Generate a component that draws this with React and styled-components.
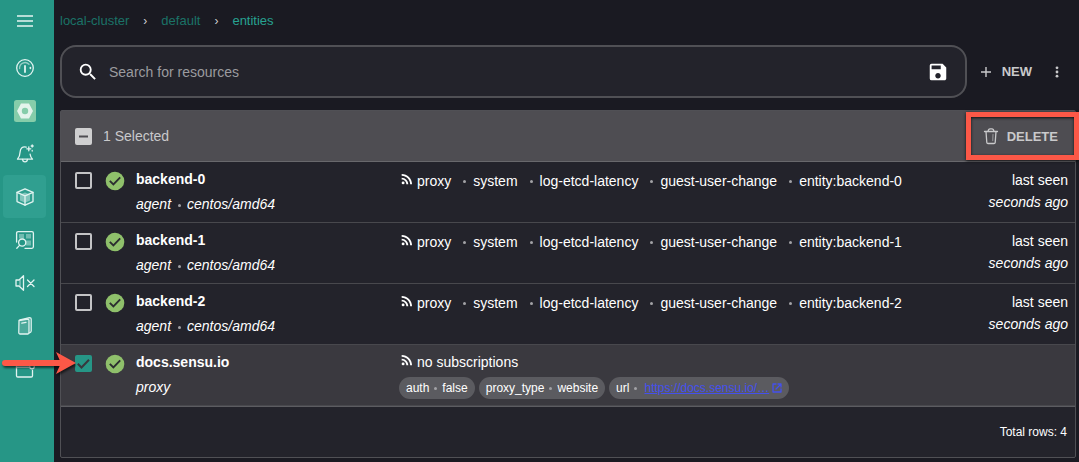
import React from "react";
import styled, { createGlobalStyle, css } from "styled-components";

const color = {
  page: "#1a1a22",
  panel: "#23232b",
  border: "#505055",
  header: "#4e4d52",
  selected: "#3a393f",
  teal: "#269686",
  tealDark: "#1b7267",
  tealBright: "#27a291",
  muted: "#c9c9cb",
  ok: "#8fc06b",
  callout: "#fc5847",
};

const GlobalStyle = createGlobalStyle`
  *, *::before, *::after { box-sizing: border-box; }
  body {
    margin: 0;
    background: ${color.page};
    color: #fff;
    font-family: "Liberation Sans", Arial, sans-serif;
    font-size: 14px;
  }
  button, input { font: inherit; color: inherit; }
`;

const Layout = styled.div`
  display: flex;
  min-height: 100vh;
`;

const Sidebar = styled.nav`
  flex: none;
  width: 54px;
  padding: 0 3px;
  background: ${color.teal};
`;

const MenuButton = styled.button`
  display: flex;
  align-items: center;
  justify-content: center;
  width: 43px;
  height: 42px;
  margin-bottom: 4px;
  padding: 0;
  border: 0;
  background: none;
`;

const NavLink = styled.a`
  display: flex;
  align-items: center;
  justify-content: center;
  width: 43px;
  height: 43px;
  border-radius: 4px;
  color: #e2f4f1;
  background: ${(p) => (p.$active ? "#309f90" : "none")};
`;

const Main = styled.main`
  flex: 1;
  min-width: 0;
  padding: 0 3px 4px 6px;
`;

const Breadcrumbs = styled.div`
  display: flex;
  align-items: center;
  height: 41px;
  margin-bottom: 4px;
  font-size: 13px;
`;

const Crumb = styled.a`
  color: ${(p) => (p.$current ? color.tealBright : color.tealDark)};
  text-decoration: none;
`;

const CrumbArrow = styled.span`
  width: 32px;
  text-align: center;
  color: #d0d0d2;
  font-size: 12px;
`;

const Toolbar = styled.div`
  display: flex;
  align-items: center;
  margin-bottom: 12px;
`;

const SearchBox = styled.div`
  flex: 1;
  display: flex;
  align-items: center;
  gap: 10px;
  height: 53px;
  padding: 0 16px 0 15px;
  border: 2px solid ${color.border};
  border-radius: 16px;
  background: ${color.panel};
`;

const SearchInput = styled.input`
  flex: 1;
  min-width: 0;
  padding: 0;
  border: 0;
  outline: 0;
  background: none;
  &::placeholder { color: #9b9b9f; opacity: 1; }
`;

const IconButton = styled.button`
  display: flex;
  padding: 0;
  border: 0;
  background: none;
`;

const TextButton = styled.button`
  display: flex;
  align-items: center;
  gap: 7px;
  padding: 0;
  border: 0;
  background: none;
  color: ${color.muted};
  font-size: 13px;
  font-weight: 700;
  text-transform: uppercase;
`;

const ToolbarActions = styled.div`
  display: flex;
  align-items: center;
  gap: 16px;
  padding: 0 10px;
  color: ${color.muted};
`;

const Table = styled.table`
  width: 100%;
  table-layout: fixed;
  border-collapse: separate;
  border-spacing: 0;
  border: 1px solid ${color.border};
  border-radius: 2px;
  background: ${color.panel};
`;

const Col = styled.col`
  width: ${(p) => p.$width};
`;

const HeadCell = styled.th`
  height: 51px;
  padding: 0 17px 0 14px;
  border-bottom: 1px solid #68686c;
  background: ${color.header};
  font-weight: 400;
`;

const SelectionBar = styled.div`
  display: flex;
  align-items: center;
  gap: 11px;
  color: ${color.muted};
`;

const SelectionLabel = styled.label`
  flex: 1;
  text-align: left;
`;

const Callout = styled.div`
  position: relative;
  &::after {
    content: "";
    position: absolute;
    top: -15px;
    bottom: -15px;
    left: -16px;
    right: -21px;
    border: 5px solid ${color.callout};
    box-shadow: 0 1px 3px rgba(0, 0, 0, 0.8), inset 0 1px 3px rgba(0, 0, 0, 0.8);
    pointer-events: none;
  }
`;

const Row = styled.tr`
  background: ${(p) => (p.$selected ? color.selected : "none")};
`;

const Cell = styled.td`
  height: 61px;
  padding: ${(p) => p.$pad || "0"};
  border-bottom: 1px solid #48484d;
  vertical-align: top;
  text-align: ${(p) => p.$align || "left"};
  white-space: nowrap;
`;

const FootCell = styled.td`
  height: 51px;
  padding: 0 8px;
  border-top: 1px solid #5c5c61;
  text-align: right;
  font-size: 12px;
`;

const CheckWrap = styled.span`
  position: relative;
  display: flex;
  width: 17px;
  height: 17px;
`;

const CheckInput = styled.input`
  appearance: none;
  width: 17px;
  height: 17px;
  margin: 0;
  border: 2px solid #c4c4c6;
  border-radius: 2px;
  ${(p) => p.$fill && css`
    border-color: ${p.$fill};
    background: ${p.$fill};
  `}
`;

const CheckMark = styled.svg`
  position: absolute;
  inset: 0;
  pointer-events: none;
`;

const Arrow = styled.svg`
  position: absolute;
  top: -4px;
  right: 16px;
  width: 76px;
  height: 28px;
  pointer-events: none;
`;

const Name = styled.div`
  line-height: 24px;
  font-weight: 700;
`;

const Detail = styled.div`
  line-height: ${(p) => p.$line || "26px"};
  font-style: italic;
`;

const Seen = styled.div`
  line-height: 22px;
`;

const Dot = styled.span`
  display: inline-block;
  width: 3px;
  height: 3px;
  margin: ${(p) => p.$gap || "0 6px 0 7px"};
  border-radius: 50%;
  background: #a2a2a6;
  vertical-align: middle;
`;

const Subscriptions = styled.div`
  display: flex;
  align-items: center;
  height: 24px;
`;

const FeedIcon = styled.svg`
  flex: none;
  width: 16px;
  height: 16px;
  margin: 0 2px 4px 0;
  fill: #fff;
`;

const Labels = styled.div`
  display: flex;
  gap: 4px;
  padding-top: 3px;
`;

const Label = styled.span`
  display: flex;
  align-items: center;
  height: 22px;
  padding: 0 7px;
  border-radius: 11px;
  background: #5b5b60;
  font-size: 12px;
`;

const LabelLink = styled.a`
  display: flex;
  align-items: center;
  gap: 3px;
  margin-left: 2px;
  color: #4450ee;
  text-decoration: underline;
`;

const line = { fill: "none", stroke: "currentColor", strokeLinecap: "round", strokeLinejoin: "round" };

const NavIcon = ({ children }) => (
  <svg width="20" height="20" viewBox="0 0 20 20" strokeWidth="1.3" {...line}>{children}</svg>
);

const icons = {
  Dashboard: (
    <NavIcon>
      <circle cx="10" cy="10" r="8.3" />
      <path d="M4.6 10.5A5.5 5.5 0 0 1 14 6.2" opacity="0.6" />
      <path d="M10 8v6" strokeWidth="1.8" />
      <path d="M15.4 9.5v1" strokeWidth="1.6" />
    </NavIcon>
  ),
  Namespace: (
    <svg width="22" height="22" viewBox="0 0 22 22">
      <rect width="22" height="22" rx="2.5" fill="#86cdaa" />
      <path d="M7 3.600h8l4 7.400-4 7.400H7L3 11z" fill="#e4f4ec" />
      <circle cx="11" cy="11" r="3.200" fill="#86cdaa" />
    </svg>
  ),
  Events: (
    <NavIcon>
      <path d="M11.2 3.200C7.600 2 5.300 4.500 5.100 8c-.1 3.500-.8 5-2.600 7.200h15c-1.500-1.800-2.200-3-2.400-5" />
      <path d="M7.600 15.500c.2 3.200 4.600 3.200 4.800 0" />
      <path d="M13.800 2.800v4M11.800 4.800h4M17.200 1v2M16.200 2h2M17.200 6.500v.6" />
    </NavIcon>
  ),
  Entities: (
    <NavIcon>
      <path d="M10 1.800l8 3.500v9.300l-8 3.600-8-3.600V5.300z" />
      <path d="M2 5.300l8 3.500 8-3.500M10 8.800v9.400" />
      <path d="M5 7.500l5-2 5 2v6l-5 2.300-5-2.300z" fill="currentColor" stroke="none" opacity="0.45" />
    </NavIcon>
  ),
  Catalog: (
    <NavIcon>
      <path d="M1.600 12V3.200c0-1 .5-1.500 1.500-1.500h13.800c1 0 1.500.5 1.500 1.500v13.600c0 1-.5 1.500-1.500 1.500H10" />
      <path d="M4 4h5v4.500H4zM11 4h5v4.500h-5zM11 10.500h5v5h-5z" fill="currentColor" stroke="none" opacity="0.4" />
      <circle cx="7.200" cy="12.600" r="3.600" />
      <path d="M4.500 15.400l-2.700 2.800" />
    </NavIcon>
  ),
  Silences: (
    <NavIcon>
      <path d="M1 7h3l4.500-4.300v14.600L4 13H1z" />
      <path d="M5 7v6" opacity="0.6" />
      <path d="M12.500 7l6.500 6.500M19 7l-6.500 6.500" />
    </NavIcon>
  ),
  Configuration: (
    <NavIcon>
      <path d="M4 4.500L12.800 3c.8 0 1.200.4 1.200 1.200v12.300c0 1-.4 1.500-1.200 1.500H5.200C4.300 18 3.800 17.300 3.800 16.500z" />
      <path d="M5 3.800l9.500-2.200c1 0 1.700.5 1.700 1.500v12c0 .8-.7 1.500-1.800 1.700" />
      <path d="M6.800 7.200l4.200-.8" />
      <path d="M4 4.500L14 3v15H5z" fill="currentColor" stroke="none" opacity="0.2" />
    </NavIcon>
  ),
  Resources: (
    <NavIcon>
      <path d="M14 5H1.500v11.700c0 .8.500 1.300 1.300 1.300h13.400c.8 0 1.300-.5 1.300-1.300V11.500" />
      <path d="M1.500 8.200H14" />
      <circle cx="17" cy="7.500" r="2.300" />
    </NavIcon>
  ),
};

const Tick = () => (
  <CheckMark viewBox="0 0 17 17" width="17" height="17">
    <path d="M2.800 8.800l3.700 3.700 7.500-7.700" fill="none" stroke="#38373d" strokeWidth="2" />
  </CheckMark>
);

const StatusIcon = () => (
  <svg width="20" height="20" viewBox="0 0 20 20" role="img" aria-label="passing">
    <circle cx="10" cy="10" r="9.300" fill={color.ok} />
    <path d="M4.800 9.800l3.600 3.600 6.800-7" fill="none" stroke="#2b2d30" strokeWidth="1.900" />
  </svg>
);

const Feed = () => (
  <FeedIcon viewBox="0 0 24 24">
    <circle cx="6.180" cy="17.820" r="2.180" />
    <path d="M4 4.440v2.830c7.030 0 12.730 5.700 12.730 12.730h2.830C19.560 11.410 12.590 4.440 4 4.440zm0 5.660v2.830c3.900 0 7.070 3.170 7.070 7.070h2.830c0-5.470-4.430-9.900-9.900-9.900z" />
  </FeedIcon>
);

const backends = ["backend-0", "backend-1", "backend-2"].map((name) => ({
  name,
  kind: "agent",
  platform: "centos/amd64",
  subscriptions: ["proxy", "system", "log-etcd-latency", "guest-user-change", `entity:${name}`],
  seen: "seconds ago",
}));

const entities = [
  ...backends,
  {
    name: "docs.sensu.io",
    kind: "proxy",
    subscriptions: [],
    labels: [["auth", "false"], ["proxy_type", "website"]],
    url: "https://docs.sensu.io/…",
    selected: true,
  },
];

function EntityRow({ entity }) {
  return (
    <Row $selected={entity.selected}>
      <Cell $pad="10px 14px">
        <CheckWrap>
          <CheckInput
            type="checkbox"
            aria-label={`Select ${entity.name}`}
            defaultChecked={entity.selected}
            $fill={entity.selected && color.teal}
          />
          {entity.selected && <Tick />}
          {entity.selected && (
            <Arrow viewBox="0 0 76 28">
              <g style={{ filter: "drop-shadow(1px 2px 1px rgba(0,0,0,.6))" }}>
                <path d="M5 12h56" stroke={color.callout} strokeWidth="6" strokeLinecap="round" />
                <path d="M56 1l20 11-20 11 5-11z" fill={color.callout} />
              </g>
            </Arrow>
          )}
        </CheckWrap>
      </Cell>
      <Cell $pad="9px 0"><StatusIcon /></Cell>
      <Cell $pad="5px 0">
        <Name>{entity.name}</Name>
        <Detail>
          {entity.kind}
          {entity.platform && <><Dot />{entity.platform}</>}
        </Detail>
      </Cell>
      <Cell $pad={entity.labels ? "5px 0 0" : "7px 0 0"}>
        <Subscriptions>
          <Feed />
          {entity.subscriptions.length === 0 && "no subscriptions"}
          {entity.subscriptions.map((name, i) => (
            <React.Fragment key={name}>
              {i > 0 && <Dot $gap="0 7px 0 12px" />}
              {name}
            </React.Fragment>
          ))}
        </Subscriptions>
        {entity.labels && (
          <Labels>
            {entity.labels.map(([key, value]) => (
              <Label key={key}>{key}<Dot $gap="0 5px" />{value}</Label>
            ))}
            <Label>
              url<Dot $gap="0 5px" />
              <LabelLink href="#url">
                {entity.url}
                <svg width="10" height="10" viewBox="0 0 10 10" {...line} strokeWidth="1.300">
                  <path d="M4 1H1v8h8V6M6 1h3v3M9 1L4 6" />
                </svg>
              </LabelLink>
            </Label>
          </Labels>
        )}
      </Cell>
      <Cell $pad="7px 7px 0 0" $align="right">
        {entity.seen && (
          <>
            <Seen>last seen</Seen>
            <Detail $line="22px">{entity.seen}</Detail>
          </>
        )}
      </Cell>
    </Row>
  );
}

export default function App() {
  return (
    <Layout>
      <GlobalStyle />
      <Sidebar aria-label="Primary">
        <MenuButton aria-label="Menu">
          <svg width="16" height="12" viewBox="0 0 16 12">
            <path d="M0 1h16M0 6h16M0 11h16" stroke="#e6f5f2" strokeWidth="1.500" />
          </svg>
        </MenuButton>
        {Object.entries(icons).map(([name, icon]) => (
          <NavLink key={name} href={`#${name}`} aria-label={name} $active={name === "Entities"}>
            {icon}
          </NavLink>
        ))}
      </Sidebar>
      <Main>
        <Breadcrumbs>
          <Crumb href="#cluster">local-cluster</Crumb>
          <CrumbArrow>›</CrumbArrow>
          <Crumb href="#default">default</Crumb>
          <CrumbArrow>›</CrumbArrow>
          <Crumb href="#entities" $current>entities</Crumb>
        </Breadcrumbs>
        <Toolbar>
          <SearchBox>
            <svg width="22" height="22" viewBox="0 0 24 24" fill="#fff">
              <path d="M15.500 14h-.79l-.28-.27A6.470 6.470 0 0 0 16 9.500 6.500 6.500 0 1 0 9.500 16c1.610 0 3.090-.59 4.230-1.570l.27.28v.79l5 4.990L20.490 19l-4.990-5zm-6 0C7.010 14 5 11.990 5 9.500S7.010 5 9.500 5 14 7.010 14 9.500 11.990 14 9.500 14z" />
            </svg>
            <SearchInput type="text" placeholder="Search for resources" aria-label="Search for resources" />
            <IconButton aria-label="Save search">
              <svg width="22" height="22" viewBox="0 0 24 24" fill="#fff">
                <path d="M17 3H5a2 2 0 0 0-2 2v14a2 2 0 0 0 2 2h14c1.100 0 2-.9 2-2V7l-4-4zm-5 16c-1.660 0-3-1.340-3-3s1.340-3 3-3 3 1.340 3 3-1.340 3-3 3zm3-10H5V5h10v4z" />
              </svg>
            </IconButton>
          </SearchBox>
          <ToolbarActions>
            <TextButton>
              <svg width="18" height="18" viewBox="0 0 18 18">
                <path d="M9 4v10M4 9h10" stroke="currentColor" strokeWidth="1.400" />
              </svg>
              New
            </TextButton>
            <IconButton aria-label="More">
              <svg width="18" height="18" viewBox="0 0 18 18" fill="currentColor">
                <circle cx="9" cy="4.800" r="1.400" />
                <circle cx="9" cy="9" r="1.400" />
                <circle cx="9" cy="13.200" r="1.400" />
              </svg>
            </IconButton>
          </ToolbarActions>
        </Toolbar>
        <Table>
          <colgroup>
            <Col $width="44px" />
            <Col $width="31px" />
            <Col $width="263px" />
            <Col />
            <Col $width="110px" />
          </colgroup>
          <thead>
            <tr>
              <HeadCell colSpan={5}>
                <SelectionBar>
                  <CheckWrap>
                    <CheckInput type="checkbox" id="select-all" $fill="#cfcfd0" />
                    <CheckMark viewBox="0 0 17 17" width="17" height="17">
                      <path d="M4 8.500h9" stroke="#4e4d52" strokeWidth="2" />
                    </CheckMark>
                  </CheckWrap>
                  <SelectionLabel htmlFor="select-all">1 Selected</SelectionLabel>
                  <Callout>
                    <TextButton>
                      <svg width="18" height="18" viewBox="0 0 18 18" {...line} strokeWidth="1.300">
                        <path d="M2.500 4.500h13M4 4.500l.8 11c.1.700.5 1 1.200 1h6c.7 0 1.100-.3 1.200-1l.8-11M6 4.500c.3-1.800 1-2.700 2-2.700h2c1 0 1.700.9 2 2.700" />
                        <path d="M11 7.500l-.3 6" opacity="0.5" />
                      </svg>
                      Delete
                    </TextButton>
                  </Callout>
                </SelectionBar>
              </HeadCell>
            </tr>
          </thead>
          <tbody>
            {entities.map((entity) => <EntityRow key={entity.name} entity={entity} />)}
          </tbody>
          <tfoot>
            <tr>
              <FootCell colSpan={5}>Total rows: 4</FootCell>
            </tr>
          </tfoot>
        </Table>
      </Main>
    </Layout>
  );
}
